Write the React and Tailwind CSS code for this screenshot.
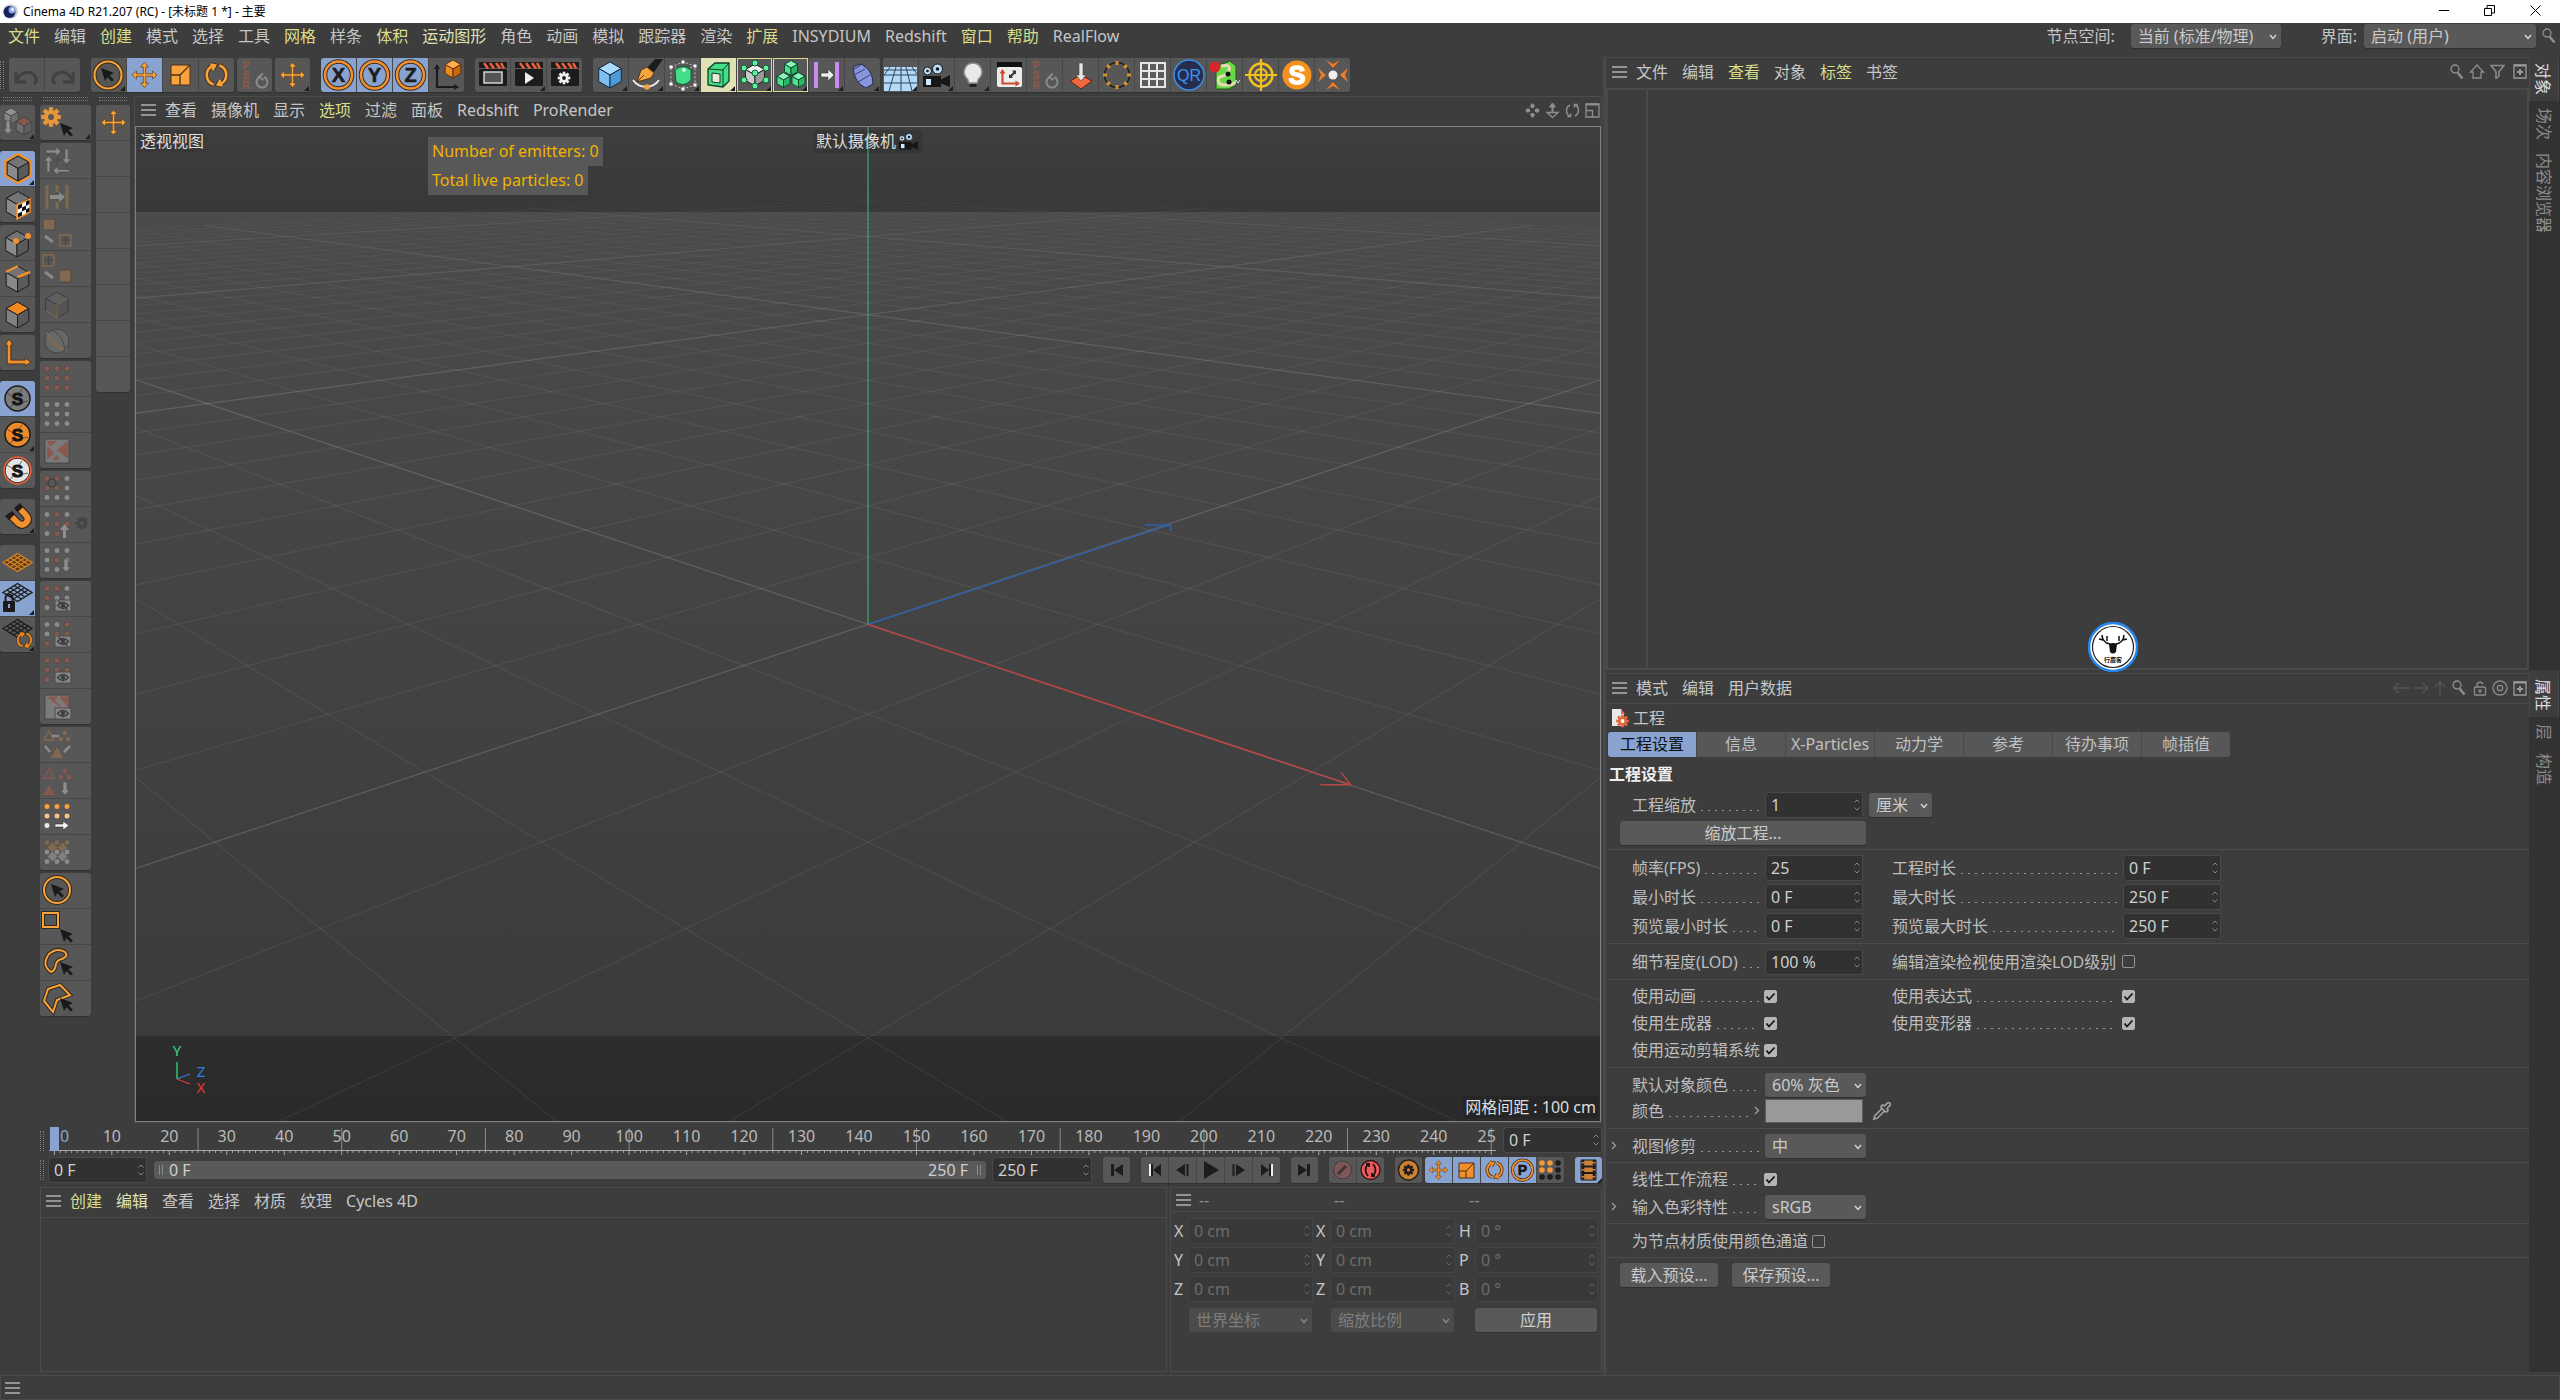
import React from 'react';
import { Pipette } from 'lucide-react';

const ORANGE = '#f09030';
const GREEN = '#44dd88';
const DARK = '#1c1c1c';

/* ---------- small shared parts ---------- */

function Burger() {
  return (
    <button aria-label="菜单" className="flex w-[15px] flex-col gap-[3px]">
      <span className="h-[2px] w-full bg-[#949494]" />
      <span className="h-[2px] w-full bg-[#949494]" />
      <span className="h-[2px] w-full bg-[#949494]" />
    </button>
  );
}

const TONES = {
  hot: 'text-[#d9dd8a]',
  warm: 'text-[#e0e2b6]',
  plain: 'text-[#c6c6c6]',
};

function Menu({ items }) {
  return (
    <nav className="flex items-center gap-[14px]">
      {items.map(([name, tone]) => (
        <button key={name} className={TONES[tone || 'plain']}>{name}</button>
      ))}
    </nav>
  );
}

function Svg({ children, w = 35, h = 34 }) {
  return <svg width={w} height={h} viewBox={`0 0 ${w} ${h}`} fill="none" className="font-['Liberation_Sans',sans-serif]">{children}</svg>;
}

function Corner({ w = 35, h = 34 }) {
  return <path d={`M${w - 1} ${h - 6}V${h - 1}H${w - 6}Z`} fill={DARK} />;
}

function ToolGroup({ children }) {
  return (
    <div className="flex shrink-0 gap-px overflow-hidden rounded-[3px] bg-[#474747] shadow-[0_1px_1px_#303030]">{children}</div>
  );
}

function Tool({ label, on, cream, ring, corner, children }) {
  const bg = on ? 'bg-[#88a3d0]' : cream ? 'bg-[#e0e2b6]' : 'bg-[#575757]';
  return (
    <button aria-label={label} className={`h-[34px] w-[35px] ${bg} ${ring ? 'outline outline-1 -outline-offset-1 outline-[#dadc8c]' : ''}`}>
      <Svg>
        {children}
        {corner && <Corner />}
      </Svg>
    </button>
  );
}

function SideGroup({ children, className = '' }) {
  return (
    <div className={`flex flex-col gap-px overflow-hidden rounded-[3px] bg-[#474747] shadow-[0_1px_1px_#303030] ${className}`}>{children}</div>
  );
}

function SideTool({ label, on, corner, wide, children }) {
  return (
    <button aria-label={label} className={`h-[35px] w-full ${on ? 'bg-[#88a3d0]' : 'bg-[#575757]'}`}>
      <Svg w={wide ? 51 : 35} h={35}>
        {children}
        {corner && <Corner w={wide ? 51 : 35} h={35} />}
      </Svg>
    </button>
  );
}

function GripH() {
  return <div className="mx-[3px] h-[4px] border-y border-dotted border-[#7d7d7d]" />;
}

function GripV() {
  return <div className="h-[20px] w-[4px] shrink-0 border-x border-dotted border-[#7d7d7d]" />;
}

function Field({ label, value, id, dim, className = 'w-[98px]' }) {
  return (
    <div className={`flex h-[26px] shrink-0 items-center rounded-l-[4px] border pr-px ${dim ? 'border-[#434343] bg-[#393939]' : 'border-[#494949] bg-[#313131]'} ${className}`}>
      <input
        id={id}
        aria-label={label}
        disabled={dim}
        defaultValue={value}
        className={`h-full w-full min-w-0 bg-transparent pl-[5px] outline-none ${dim ? 'text-[#6c6c6c]' : 'text-[#cfcfcf]'}`}
      />
      <svg width="8" height="14" viewBox="0 0 8 14" fill="none" stroke={dim ? '#666' : '#858585'} className="shrink-0">
        <path d="M1.500 4.500 4 2l2.500 2.500M1.500 9.500 4 12l2.500-2.500" />
      </svg>
    </div>
  );
}

function Select({ label, value, id, dim, className }) {
  return (
    <div className={`relative h-[24px] shrink-0 rounded-[3px] ${dim ? 'bg-[#4b4b4b]' : 'bg-[#595959] shadow-[0_1px_1px_#2f2f2f]'} ${className}`}>
      <select
        id={id}
        aria-label={label}
        disabled={dim}
        className={`h-full w-full appearance-none bg-transparent pl-[7px] leading-[22px] outline-none ${dim ? 'text-[#7d7d7d]' : 'text-[#cacaca]'}`}
      >
        <option>{value}</option>
      </select>
      <svg width="8" height="6" viewBox="0 0 8 6" fill="none" stroke={dim ? '#8a8a8a' : '#dcdcdc'} strokeWidth="1.300" className="pointer-events-none absolute right-[4px] top-[10px]">
        <path d="M1 1l3 3.500L7 1" />
      </svg>
    </div>
  );
}

function Check({ id, checked }) {
  return (
    <span className="grid size-[13px] shrink-0">
      <input
        id={id}
        type="checkbox"
        defaultChecked={checked}
        className="col-start-1 row-start-1 size-[13px] appearance-none rounded-[2px] border border-[#949494] checked:border-[#b5b5b5] checked:bg-[#b5b5b5]"
      />
      {checked && (
        <svg viewBox="0 0 13 13" fill="none" stroke="#151515" strokeWidth="1.800" className="pointer-events-none col-start-1 row-start-1">
          <path d="M2.500 6.500 5 9.500 10.500 3.500" />
        </svg>
      )}
    </span>
  );
}

/* label followed by a row of leader dots */
function Label({ children, htmlFor, arrow, className = 'w-[133px]' }) {
  return (
    <label htmlFor={htmlFor} className={`flex shrink-0 items-center whitespace-nowrap pr-[5px] text-[#bdbdbd] ${className}`}>
      {children}
      <span className="mt-[11px] h-px flex-1 bg-[linear-gradient(90deg,transparent_5px,#969696_5px)] bg-[length:7px_1px]" />
      {arrow && <span className="ml-[3px] text-[#9a9a9a]"><Caret /></span>}
    </label>
  );
}

function Caret() {
  return (
    <svg width="6" height="9" viewBox="0 0 6 9" fill="none" stroke="#a0a0a0" strokeWidth="1.300">
      <path d="M1 1l3.500 3.500L1 8" />
    </svg>
  );
}

/* ---------- icon shapes ---------- */

function Cube({ x, y, r, c, line = DARK, sw = 1 }) {
  const a = r * 0.87;
  const b = r * 0.5;
  return (
    <g stroke={line} strokeWidth={sw} strokeLinejoin="round">
      <path d={`M${x} ${y - r}L${x + a} ${y - b}L${x} ${y}L${x - a} ${y - b}Z`} fill={c[0]} />
      <path d={`M${x - a} ${y - b}L${x} ${y}V${y + r}L${x - a} ${y + b}Z`} fill={c[1]} />
      <path d={`M${x + a} ${y - b}L${x} ${y}V${y + r}L${x + a} ${y + b}Z`} fill={c[2]} />
    </g>
  );
}

const GREY = ['#747474', '#8a8a8a', '#5a5a5a'];

function MoveIcon({ x = 17.5, y = 17, s = 1, c = '#f7a23b' }) {
  return (
    <g transform={`translate(${x} ${y}) scale(${s})`} fill={c} stroke="#5a3a18" strokeWidth=".700">
      <path d="M0-12.500 4-8H1.200V-1.200H8V-4L12.500 0 8 4V1.200H1.200V8H4L0 12.500-4 8H-1.200V1.200H-8V4L-12.500 0-8-4V-1.200H-1.200V-8H-4Z" />
    </g>
  );
}

function Cursor({ x, y, s = 1 }) {
  return <path transform={`translate(${x} ${y}) scale(${s})`} d="M0 0 13 5 8.500 7.200 13 12 10.500 13.500 6.500 9 4 13Z" fill="#191919" />;
}

function Axis({ name }) {
  return (
    <>
      <circle cx="17.500" cy="17" r="13.500" stroke="#3c2c1c" strokeWidth="4.500" />
      <circle cx="17.500" cy="17" r="13.500" stroke={ORANGE} strokeWidth="2.500" />
      <text x="17.500" y="24" textAnchor="middle" fontSize="20" fontWeight="700" fill="#1d1d1d" stroke="#1d1d1d" strokeWidth=".600">{name}</text>
    </>
  );
}

function Rotate({ x = 17.500, y = 17, s = 1, c = '#f7a23b', edge = '#4a3018' }) {
  return (
    <g transform={`translate(${x} ${y}) scale(${s})`}>
      {[edge, c].map((col, k) => (
        <g key={col} stroke={col} strokeWidth={k ? 2.6 : 4.6} fill="none">
          <path d="M-3 9.500A10 10 0 0 1-4-9" />
          <path d="M3-9.500A10 10 0 0 1 4 9" />
          <path d="M-6-10.500-1.500-9.500-4-5M6 10.500 1.500 9.500 4 5" />
        </g>
      ))}
    </g>
  );
}

function Psr() {
  return (
    <>
      <g fontSize="10" fontWeight="700" fill="#8a574b" stroke="#8a574b" strokeWidth=".500" textAnchor="middle">
        <text x="9" y="11">P</text>
        <text x="9" y="21">S</text>
        <text x="9" y="31">R</text>
      </g>
      <path d="M22 19.500A5.500 5.500 0 1 0 27 19M26 15.500 22 19l4.500 3" stroke="#8a8a8a" strokeWidth="2" />
    </>
  );
}

function Clapper({ children }) {
  return (
    <>
      <rect x="4" y="11" width="28" height="17" rx="1.500" fill={DARK} />
      <path d="M4 4h28v6H4Z" fill={DARK} />
      <path d="M9 5l4 5.500M15 5l4 5.500M21 5l4 5.500M26 5l3 5.500" stroke="#e8603c" strokeWidth="2.600" />
      {children}
    </>
  );
}

function Gear({ x, y, r = 4, c = '#eee', hole = DARK }) {
  const teeth = [0, 45, 90, 135];
  return (
    <g transform={`translate(${x} ${y})`}>
      {teeth.map((t) => (
        <rect key={t} x={-r * 0.3} y={-r * 1.4} width={r * 0.6} height={r * 2.8} fill={c} transform={`rotate(${t})`} />
      ))}
      <circle r={r} fill={c} />
      <circle r={r * 0.42} fill={hole} />
    </g>
  );
}

function Camera({ s = 1 }) {
  return (
    <g transform={`scale(${s})`}>
      <path d="M4 18h18v11H4Z" fill="#161616" />
      <path d="M21 22l10-5v12l-10-4Z" fill="#161616" />
      <rect x="7" y="21" width="5" height="6" fill="#cfe8fb" />
      <circle cx="8.500" cy="13" r="4" fill="#bcdcf6" stroke="#161616" />
      <circle cx="18.500" cy="11" r="5" fill="#bcdcf6" stroke="#161616" />
      <circle cx="8.500" cy="13" r="1.300" fill="#161616" />
      <circle cx="18.500" cy="11" r="1.800" fill="#161616" />
    </g>
  );
}

/* 3x3 point matrix: r = red, g = grey, o = orange, p = pale, w = white, t = tan, . = empty */
const DOT = { r: '#85594d', g: '#8b8b8b', o: '#f9a23c', p: '#f5c386', w: '#f0e6dc', t: '#7c6a54' };

function Dots({ map }) {
  return map.split('').map((k, i) =>
    k === '.' ? null : (
      <circle key={i} cx={7 + (i % 3) * 10} cy={7.5 + Math.floor(i / 3) * 9.5} r="3" fill={DOT[k]} stroke="#4a4a4a" strokeWidth=".800" />
    ),
  );
}

function Eye({ off }) {
  return (
    <g stroke="#3d3d3d">
      <rect x="15" y="19" width="16" height="11" fill="#858585" stroke="#4c4c4c" />
      <path d="M17.500 24.500q5.500-6 11 0q-5.500 6-11 0Z" strokeWidth="1.300" />
      <circle cx="23" cy="24.500" r="1.800" fill="#3d3d3d" />
      {off && <path d="M18.500 20l9 9" strokeWidth="1.500" />}
    </g>
  );
}

function SBall({ fill, ring }) {
  return (
    <>
      <circle cx="17.500" cy="17.500" r="12.500" fill={fill} stroke={DARK} strokeWidth="1.500" />
      {ring && <circle cx="17.500" cy="17.500" r="13.300" stroke={ring} strokeWidth="1.800" />}
      <path d="M7 12l6 4M22 8l-5 7M28 20l-9 2M10 27l5-7" stroke="#333" strokeWidth=".700" />
      <text x="17.500" y="23.500" textAnchor="middle" fontSize="17" fontWeight="700" fill="#161616" stroke="#161616">S</text>
    </>
  );
}

function Mesh({ c, dy = 0, fill = 'none' }) {
  return (
    <g transform={`translate(0 ${dy})`} stroke={c} strokeWidth="1.400">
      <path d="M3 17.500 17.500 8.500 32 17.500 17.500 26.500Z" fill={fill} />
      <path d="M7 15l14.500 9M10.500 13l14.500 9M14 10.500l14.500 9M28 15l-14.500 9M24.500 13 10 22M21 10.500 6.500 19.500" />
    </g>
  );
}

function ArrowDown({ x, y }) {
  return <path d={`M${x - 2} ${y}h4v8h2.500l-4.500 5-4.500-5h2.500Z`} fill="#8f8f8f" stroke="#4a4a4a" strokeWidth=".600" />;
}

/* ---------- top bars ---------- */

function TitleBar() {
  return (
    <header className="flex h-[23px] items-center bg-white pl-[3px] text-[12px] text-black">
      <svg width="15" height="17" viewBox="0 0 15 17">
        <circle cx="7.500" cy="8.500" r="7.300" fill="#c9cad6" />
        <circle cx="6.500" cy="9" r="6" fill="#14225e" />
        <circle cx="9" cy="7" r="3.500" fill="#8fa3de" />
        <circle cx="9.500" cy="6.500" r="1.500" fill="#fff" />
      </svg>
      <span className="ml-[5px]">Cinema 4D R21.207 (RC) - [未标题 1 *] - 主要</span>
      <div className="ml-auto flex items-center gap-[35px] pb-[2px] pr-[19px]">
        <button aria-label="最小化" className="h-px w-[10px] bg-black" />
        <button aria-label="还原">
          <svg width="11" height="11" viewBox="0 0 11 11" fill="none" stroke="#000"><path d="M.5 3.500h7v7h-7ZM3 3V.5h7.500V8H8" /></svg>
        </button>
        <button aria-label="关闭">
          <svg width="11" height="11" viewBox="0 0 11 11" stroke="#000"><path d="M.5.5l10 10M10.500.5l-10 10" /></svg>
        </button>
      </div>
    </header>
  );
}

const MAIN_MENU = [
  ['文件', 'hot'], ['编辑'], ['创建', 'hot'], ['模式'], ['选择'], ['工具'], ['网格', 'hot'], ['样条'], ['体积', 'hot'],
  ['运动图形', 'warm'], ['角色'], ['动画'], ['模拟'], ['跟踪器'], ['渲染'], ['扩展', 'hot'], ['INSYDIUM'], ['Redshift'],
  ['窗口', 'hot'], ['帮助', 'hot'], ['RealFlow'],
];

function SearchIcon() {
  return (
    <svg width="14" height="16" viewBox="0 0 14 16" fill="none" stroke="#8f8f8f">
      <circle cx="5" cy="5" r="4" strokeWidth="1.300" />
      <path d="M7.500 8.500l5 6" strokeWidth="2.400" />
    </svg>
  );
}

function MenuBar() {
  return (
    <div className="flex h-[34px] items-start pl-[8px] pr-[4px] pt-px">
      <div className="flex h-[24px] items-center"><Menu items={MAIN_MENU} /></div>
      <div className="ml-auto flex items-center">
        <label htmlFor="node" className="mr-[16px]">节点空间:</label>
        <Select id="node" value="当前 (标准/物理)" className="w-[150px]" />
        <label htmlFor="layout" className="ml-[40px] mr-[7px]">界面:</label>
        <Select id="layout" value="启动 (用户)" className="w-[172px]" />
        <button aria-label="搜索" className="ml-[6px]"><SearchIcon /></button>
      </div>
    </div>
  );
}

function MainToolbar() {
  return (
    <div className="flex h-[39px] items-start pt-px">
      <div className="mt-[3px] h-[28px] w-[4px] shrink-0 border-x border-dotted border-[#7d7d7d]" />
      <div className="ml-[5px] flex gap-[11px]">
        <ToolGroup>
          <Tool label="撤销"><path d="M7 14v10h10M8 23c2-8 10-11 16-7 4 3 4 8 1 10" stroke="#414141" strokeWidth="3" /></Tool>
          <Tool label="重做"><path d="M28 14v10H18M27 23c-2-8-10-11-16-7-4 3-4 8-1 10" stroke="#414141" strokeWidth="3" /></Tool>
        </ToolGroup>
        <div className="flex gap-[3px]">
          <ToolGroup>
            <Tool label="实时选择" corner>
              <circle cx="17" cy="17" r="13.500" stroke="#33271a" strokeWidth="4" />
              <circle cx="17" cy="17" r="13.500" stroke="#f7a23b" strokeWidth="2.200" />
              <Cursor x={10} y={10} />
            </Tool>
            <Tool label="移动" on><MoveIcon /></Tool>
            <Tool label="缩放">
              <path d="M8 7h19v20H8Z" fill="#f7a23b" stroke="#4a3018" />
              <path d="M8 17h9v10M17 17l10-10" stroke="#4a3018" strokeWidth="1.300" />
            </Tool>
            <Tool label="旋转"><Rotate /></Tool>
          </ToolGroup>
          <ToolGroup><Tool label="PSR"><Psr /></Tool></ToolGroup>
          <ToolGroup><Tool label="最近工具" corner><MoveIcon /></Tool></ToolGroup>
        </div>
        <ToolGroup>
          <Tool label="X轴" on><Axis name="X" /></Tool>
          <Tool label="Y轴" on><Axis name="Y" /></Tool>
          <Tool label="Z轴" on><Axis name="Z" /></Tool>
          <Tool label="坐标系统">
            <path d="M8 9v20h19" stroke={DARK} strokeWidth="2.200" />
            <path d="M8 6l3 5H5ZM30 29l-5-3v6Z" fill={DARK} />
            <Cube x={24} y={11} r={9} c={['#ffb04c', '#f28a22', '#c9680c']} line="#5a3210" />
          </Tool>
        </ToolGroup>
        <ToolGroup>
          <Tool label="渲染活动视图"><Clapper><rect x="9" y="14" width="18" height="11" fill="#555" stroke="#ddd" strokeWidth="1.400" /></Clapper></Tool>
          <Tool label="渲染到图片查看器" corner><Clapper><path d="M14 14l9 6-9 6Z" fill="#eee" /></Clapper></Tool>
          <Tool label="编辑渲染设置"><Clapper><Gear x={17} y={20} r={4.5} /></Clapper></Tool>
        </ToolGroup>
        <div className="flex gap-[3px]">
          <ToolGroup>
            <Tool label="立方体" corner><Cube x={17} y={17} r={13} c={['#a9dbff', '#7cc0f5', '#4f9ad6']} line="#14283a" /></Tool>
            <Tool label="画笔" corner>
              <path d="M18 10l8-9h8l-9 13Z" fill={DARK} />
              <path d="M18 9l7 6-3 5-14 4 4-12Z" fill="#f5a53f" stroke="#5a3414" />
              <path d="M8 24l7-7" stroke="#5a3414" />
              <path d="M4 22c6 9 20 9 26 0" stroke="#eee" strokeWidth="1.800" />
              <circle cx="18" cy="29" r="2.800" fill="#f7a23b" />
            </Tool>
            <Tool label="细分曲面" corner>
              <path d="M6 9 18 4l12 4v19l-12 4-12-5ZM6 9l13 3 11-4M19 12v19" stroke="#ccc" strokeWidth=".900" strokeDasharray="2 2" />
              <path d="M10 12q8-7 16 0v10q-7 8-15 2Z" fill={GREEN} stroke="#0d5c34" />
              {[[6, 9], [18, 4], [30, 8], [30, 27], [18, 31], [6, 26], [19, 12]].map(([x, y]) => <rect key={`${x}${y}`} x={x - 1.5} y={y - 1.5} width="3" height="3" fill="#fff" />)}
            </Tool>
            <Tool label="挤压" cream corner>
              <path d="M7 11 14 5h14v18l-6 6-15-2Z" fill={GREEN} stroke="#0f3d26" strokeWidth="1.300" />
              <path d="M7 11l15 1v17M22 12l6-7" stroke="#0f3d26" />
              <path d="M11 15l8 1v9l-8-1Z" fill="#e9eadb" stroke="#0f3d26" />
            </Tool>
            <Tool label="体积生成" ring corner>
              <Cube x={18} y={17} r={11} c={['#f0f0f0', '#c8c8c8', '#9a9a9a']} />
              {[[18, 5], [7, 10], [29, 10], [18, 15], [7, 22], [29, 22], [18, 28]].map(([x, y]) => <circle key={`${x}-${y}`} cx={x} cy={y} r="3" fill="#5cf09e" stroke="#0f5c34" />)}
            </Tool>
            <Tool label="克隆" ring corner>
              {[[18, 10], [10.5, 22], [25.500, 22]].map(([x, y]) => <Cube key={x} x={x} y={y} r={7.5} c={['#8bf5ba', '#4fe08f', '#2bb768']} line="#0c4a2a" />)}
            </Tool>
            <Tool label="场" corner>
              <path d="M7 4v26M28 4v26" stroke="#c78bf2" strokeWidth="4" />
              <path d="M12 15h7v-4l6 6-6 6v-4h-7Z" fill="#eee" stroke="#333" strokeWidth=".600" />
            </Tool>
            <Tool label="弯曲" corner>
              <path d="M8 9 16 6q12 6 12 20l-7 4Q9 25 8 9Z" fill="#8796dc" stroke="#252c52" />
              <path d="M9 17l11-6M13 24l12-7M16 6q-1 3-7 5" stroke="#252c52" strokeWidth=".800" />
            </Tool>
          </ToolGroup>
          <ToolGroup>
            <Tool label="地面" corner>
              <rect x="1" y="9" width="33" height="24" fill="#b5d9f8" />
              <path d="M1 12h33M1 17h33M1 25h33M13 9 6 33M18 9v24M23 9l6 24M7 9l-6 8M29 9l5 7" stroke="#25384a" strokeWidth=".900" />
            </Tool>
            <Tool label="摄像机" corner><Camera /></Tool>
            <Tool label="灯光" corner>
              <path d="M18 5a9 9 0 0 1 5.500 16l-1.500 4h-8l-1.500-4A9 9 0 0 1 18 5Z" fill="#e9e9e9" stroke="#8c8c8c" strokeWidth="1.500" />
              <path d="M14.500 26h7v3h-7Z" fill="#222" />
            </Tool>
            <Tool label="布局">
              <rect x="6" y="4" width="25" height="6" fill="#111" />
              <rect x="6" y="9" width="25" height="20" rx="2" fill="#ececec" />
              <path d="M11.500 14v11.500h14" stroke="#c54f28" strokeWidth="2.200" />
              <path d="M11.500 11l3 4.500h-6ZM29 25.500l-4.500-3v6Z" fill="#c54f28" />
              <path d="M19 19l5-5" stroke="#333" strokeWidth="2.200" />
              <path d="M25 12.500v4l-4-4ZM18 20v-4l4 4Z" fill="#333" />
            </Tool>
            <Tool label="重置PSR"><Psr /></Tool>
            <Tool label="落到地面">
              <path d="M7 23l11-6 11 6-11 8Z" fill="#f0683a" stroke="#5c2410" />
              <path d="M16 5h4v12h3l-5 6-5-6h3Z" fill="#e6e6e6" stroke="#444" strokeWidth=".600" />
            </Tool>
            <Tool label="圆环">
              <circle cx="18" cy="17" r="12.500" stroke="#1f1f1f" strokeWidth="1.500" />
              {[0, 45, 90, 135, 180, 225, 270, 315].map((a) => <rect key={a} x="16.500" y="3" width="3" height="4" fill="#d8912c" transform={`rotate(${a} 18 17)`} />)}
            </Tool>
            <Tool label="网格">
              <rect x="5" y="4" width="26" height="26" fill="#e6e6e6" />
              {[0, 1, 2].map((r) => [0, 1, 2].map((c) => <rect key={`${r}${c}`} x={7 + c * 8} y={6 + r * 8} width="6" height="6" fill="#5b5b5b" />))}
            </Tool>
            <Tool label="QR">
              <circle cx="18" cy="17" r="15" fill="#262c4e" stroke="#3a8ee4" strokeWidth="1.500" />
              <text x="18" y="23" textAnchor="middle" fontSize="16" fill="#3c96f0">QR</text>
            </Tool>
            <Tool label="样条工具">
              <path d="M13 7l10-4 6 5v19l-7 4H9V12Z" fill="#68d848" stroke="#1c5a12" />
              <path d="M14 8q10-2 8 4t-10 7q-3 8 6 8t10-3" stroke="#ecd9b4" strokeWidth="3" />
              <circle cx="21" cy="16" r="2.500" fill="#111" /><circle cx="22" cy="24" r="2.500" fill="#111" />
              <circle cx="8" cy="9" r="5.500" fill="#d9262b" />
              <path d="M27 26l2-4 2 3 2-3" stroke="#ddd" />
            </Tool>
            <Tool label="目标">
              <circle cx="18" cy="17" r="11.500" stroke="#f4c21c" strokeWidth="2.400" />
              <circle cx="18" cy="17" r="6" stroke="#f4c21c" strokeWidth="2" />
              <path d="M18 1v32M2 17h32" stroke="#f4c21c" strokeWidth="2.200" />
            </Tool>
            <Tool label="S插件">
              <circle cx="18" cy="17" r="14.500" fill="#f5921e" />
              <text x="18" y="26" textAnchor="middle" fontSize="25" fontWeight="700" fill="#fff" stroke="#fff" strokeWidth="1.500">S</text>
            </Tool>
            <Tool label="居中">
              <path d="M11 2l7 4 7-4-7 8ZM11 32l7-4 7 4-7-8ZM3 10l8 7-8 7 3-7ZM33 10l-8 7 8 7-3-7Z" fill="#f47b20" />
              <circle cx="18" cy="17" r="4.500" fill="#efefef" />
            </Tool>
          </ToolGroup>
        </div>
      </div>
    </div>
  );
}

/* ---------- left tool columns ---------- */

function ModeColumn() {
  return (
    <div className="w-[35px]">
      <GripH />
      <SideGroup className="mt-[4px]">
        <SideTool label="转为可编辑对象" corner>
          <Cube x={11} y={11} r={8} c={['#939393', '#858585', '#6f6f6f']} line="#4a4a4a" />
          <Cube x={24} y={21} r={9} c={['#84594c', '#6e6e6e', '#5e5e5e']} line="#444" />
          <ArrowDown x={8} y={16} />
        </SideTool>
      </SideGroup>
      <SideGroup className="mt-[11px]">
        <SideTool label="模型" on corner><Cube x={18} y={17.5} r={14.5} c={GREY} line={ORANGE} sw={2.4} /><Cube x={18} y={17.5} r={12.5} c={GREY} /></SideTool>
        <SideTool label="纹理">
          <Cube x={18} y={18} r={13.5} c={GREY} />
          <path d="M17 18l13-6v13l-13 7Z" fill="#fff" stroke={ORANGE} strokeWidth="1.600" />
          <path d="M18 18.500l4-2v4l-4 2ZM26 14.500l3.500-1.500v4l-3.500 2ZM22 20.500l4-2v4l-4 2ZM18 26.500l4-2v4l-4 2ZM26 22.500l3.500-2v4L26 26Z" fill="#111" />
        </SideTool>
      </SideGroup>
      <SideGroup className="mt-[3px]">
        <SideTool label="点"><Cube x={17} y={19} r={13} c={GREY} /><circle cx="16" cy="16" r="3" fill={ORANGE} /><circle cx="28" cy="11" r="3" fill={ORANGE} /></SideTool>
        <SideTool label="边"><Cube x={17.500} y={18} r={13} c={GREY} /><path d="M6 11l12-6M18 16l12-5" stroke={ORANGE} strokeWidth="2.500" /></SideTool>
        <SideTool label="多边形"><Cube x={17.500} y={18} r={13} c={['#f58a20', '#808080', '#5a5a5a']} /></SideTool>
      </SideGroup>
      <SideGroup className="mt-[3px]">
        <SideTool label="启用轴心">
          <path d="M9 8v19h18" stroke="#3a2410" strokeWidth="4.500" />
          <path d="M9 4l4 6H5ZM31 27l-6-4v8Z" fill={ORANGE} stroke="#3a2410" strokeWidth=".700" />
          <path d="M9 8v19h18" stroke={ORANGE} strokeWidth="2.800" />
        </SideTool>
      </SideGroup>
      <SideGroup className="mt-[11px]">
        <SideTool label="独显关闭" on><SBall fill="#7b7b7b" /></SideTool>
        <SideTool label="独显单一" corner><SBall fill="#ef8a2c" /></SideTool>
        <SideTool label="独显层级"><SBall fill="#e4e4e4" ring="#e0603c" /></SideTool>
      </SideGroup>
      <SideGroup className="mt-[11px]">
        <SideTool label="捕捉" corner>
          <path d="M9 15l8 8q5 5 9 1t-1-9l-7-7" stroke="#2c1c0e" strokeWidth="8" />
          <path d="M9 15l8 8q5 5 9 1t-1-9l-7-7" stroke={ORANGE} strokeWidth="6" />
          <path d="M5 17l7-5 3 3-6 6ZM14 9l6-5 3 4-5 5Z" fill={DARK} />
        </SideTool>
      </SideGroup>
      <SideGroup className="mt-[11px]">
        <SideTool label="工作平面"><Mesh c="#d98224" fill="#5a3c18" /></SideTool>
        <SideTool label="锁定工作平面" on corner>
          <Mesh c={DARK} dy={-6} />
          <rect x="3" y="20" width="12" height="11" rx="1" fill={DARK} /><path d="M5.500 20v-3a3.500 3.500 0 0 1 7 0v3" stroke={DARK} strokeWidth="2" />
          <rect x="8" y="23" width="2" height="4" fill="#88a3d0" />
        </SideTool>
        <SideTool label="平面旋转" corner><Mesh c={DARK} dy={-6} /><Rotate x={24.5} y={23} s={0.68} c="#f58a20" /></SideTool>
      </SideGroup>
    </div>
  );
}

function SelectColumn() {
  const tan = '#80694e';
  return (
    <div className="w-[51px]">
      <GripH />
      <SideGroup className="mt-[4px]">
        <SideTool label="选择设置" wide corner><Gear x={11} y={12} r={7} c="#e8963a" hole="#575757" /><Cursor x={20} y={18} /></SideTool>
      </SideGroup>
      <SideGroup className="mt-[3px]">
        <SideTool label="循环选择" wide>
          <path d="M8 8h19v19H8ZM17 10v15M10 17h15" stroke="#4b4b4b" />
          <path d="M6 7h10v-3l5 4.500-5 4.500v-3H6ZM28 6v10h3l-4.500 5-4.500-5h3V6ZM29 29H18v3l-5-4.500 5-4v3h11ZM7 29V18H4l4.500-5 4.500 5h-3v11Z" fill="#8b8b8b" stroke="#4d4d4d" strokeWidth=".600" />
        </SideTool>
        <SideTool label="环状选择" wide>
          <path d="M7 6v24M27 6v24M17 6v7M17 23v7" stroke={tan} strokeWidth="3" /><path d="M10 16h9v-3l6 5-6 5v-3h-9Z" fill="#8b8b8b" />
        </SideTool>
        <SideTool label="转换选择" wide>
          <rect x="3" y="4" width="12" height="11" fill={tan} stroke="#4a4a4a" /><path d="M5 21l8 6" stroke="#888" strokeWidth="3" />
          <rect x="20" y="20" width="11" height="11" stroke={tan} strokeWidth="1.500" /><path d="M22 25h8M25.500 21v9" stroke="#444" />
        </SideTool>
        <SideTool label="转换轮廓" wide>
          <rect x="3" y="4" width="11" height="11" stroke={tan} strokeWidth="1.500" /><path d="M5 9h8M8.500 5v9" stroke="#444" /><path d="M5 21l8 6" stroke="#888" strokeWidth="3" />
          <rect x="19" y="19" width="12" height="12" fill={tan} stroke="#4a4a4a" />
        </SideTool>
        <SideTool label="轮廓选择" wide><Cube x={17} y={18} r={13} c={['#5e5e5e', '#595959', '#545454']} line="#3c3c3c" /><path d="M6 24l11 7V18l11-7" stroke={tan} strokeWidth="1.300" /></SideTool>
        <SideTool label="平滑着色选择" wide><circle cx="17" cy="18" r="12" fill="#686868" stroke="#444" /><path d="M7 10q6 14 20 17" stroke={tan} strokeWidth="2.500" /><path d="M12 7q12 6 13 21" stroke="#444" /></SideTool>
      </SideGroup>
      <SideGroup className="mt-[3px]">
        <SideTool label="全选" wide><Dots map="rrrrrrrrr" /></SideTool>
        <SideTool label="取消选择" wide><Dots map="ggggggggg" /></SideTool>
        <SideTool label="反选" wide>
          <rect x="5" y="6" width="24" height="24" fill="#7b7b7b" stroke="#474747" /><path d="M7 27V13l7 7ZM20 27h-8l5-5ZM28 8v18L17 17ZM7 8h10l-7 6Z" fill="#8a594c" />
        </SideTool>
      </SideGroup>
      <SideGroup className="mt-[3px]">
        <SideTool label="选择连接" wide><Dots map="rrgrrgggg" /><circle cx="12" cy="12" r="4" stroke="#3f3f3f" strokeWidth="1.500" /></SideTool>
        <SideTool label="扩展选择" wide>
          <Dots map="grgrrrgr." /><path d="M26 31V23h3l-4.500-6-4.500 6h3v8Z" fill="#8f8f8f" /><Gear x={42} y={16} r={4.5} c="#444" hole="#575757" />
        </SideTool>
        <SideTool label="收缩选择" wide><Dots map="ggggrggg." /><ArrowDown x={26} y={16} /></SideTool>
      </SideGroup>
      <SideGroup className="mt-[3px]">
        <SideTool label="隐藏选择" wide><Dots map="rrgrggg.." /><Eye off /></SideTool>
        <SideTool label="隐藏未选择" wide><Dots map="ggrgrrr.." /><Eye off /></SideTool>
        <SideTool label="全部显示" wide><Dots map="rrrrrrr.." /><Eye /></SideTool>
        <SideTool label="反转显示" wide><rect x="5" y="6" width="24" height="24" fill="#7b7b7b" stroke="#474747" /><path d="M7 8h10l-3 3 10 10M28 8v10L20 8Z" fill="#8a594c" stroke="#8a594c" /><Eye /></SideTool>
      </SideGroup>
      <SideGroup className="mt-[3px]">
        <SideTool label="转换选择模式" wide>
          <path d="M9 4l5 9H4Z" stroke={tan} strokeWidth="1.500" /><path d="M17 20l6 11H11Z" fill={tan} />
          <circle cx="25" cy="6" r="2.300" fill={tan} /><circle cx="21" cy="12" r="2.300" fill={tan} /><circle cx="28" cy="12" r="2.300" fill={tan} />
          <path d="M12 9h7M10 25l-5-6M30 19l-6 6" stroke="#8b8b8b" strokeWidth="2.500" />
        </SideTool>
        <SideTool label="设置选择集" wide>
          <path d="M9 6l5 9H4Z" stroke="#85594d" strokeWidth="1.500" /><path d="M9 22l6 10H3Z" fill="#85594d" />
          <circle cx="25" cy="8" r="2.300" fill="#85594d" /><circle cx="21" cy="14" r="2.300" fill="#85594d" /><circle cx="29" cy="14" r="2.300" fill="#85594d" /><ArrowDown x={25} y={19} />
        </SideTool>
        <SideTool label="设置顶点权重" wide><Dots map="ooopppw.." /><path d="M15 25h8v-3l6 4.500-6 4.500v-3h-8Z" fill="#f4f4f4" stroke="#333" strokeWidth=".600" /></SideTool>
        <SideTool label="填充选择" wide>
          <Dots map="tttgggggg" />
          <rect x="9" y="9" width="7" height="7" fill={tan} transform="rotate(45 12.500 12.500)" /><rect x="19" y="9" width="7" height="7" fill={tan} transform="rotate(45 22.500 12.500)" />
          <rect x="9" y="18" width="7" height="7" fill="#808080" transform="rotate(45 12.500 21.500)" /><rect x="19" y="18" width="7" height="7" fill="#808080" transform="rotate(45 22.500 21.500)" />
        </SideTool>
      </SideGroup>
      <SideGroup className="mt-[3px]">
        <SideTool label="实时选择" wide><circle cx="17" cy="17" r="13" stroke="#33271a" strokeWidth="4" /><circle cx="17" cy="17" r="13" stroke="#f7a23b" strokeWidth="2" /><Cursor x={11} y={11} /></SideTool>
        <SideTool label="框选" wide><path d="M3 4h15v14H3Z" stroke="#33271a" strokeWidth="4" /><path d="M3 4h15v14H3Z" stroke="#f7a23b" strokeWidth="2" /><Cursor x={20} y={20} /></SideTool>
        <SideTool label="套索选择" wide>
          {['#33271a', '#f7a23b'].map((c, k) => <path key={c} d="M11 27Q1 20 9 9q8-7 16-2 4 4-3 7-5 1-6 5-1 7-5 8Z" stroke={c} strokeWidth={k ? 2 : 4} />)}
          <Cursor x={20} y={17} />
        </SideTool>
        <SideTool label="多边形选择" wide>
          {['#33271a', '#f7a23b'].map((c, k) => <path key={c} d="M8 8 20 4l10 10-13 5-4 12L4 20Z" stroke={c} strokeWidth={k ? 2 : 4} />)}
          <Cursor x={20} y={17} />
        </SideTool>
      </SideGroup>
    </div>
  );
}

function EmptyColumn() {
  return (
    <div className="w-[34px]">
      <GripH />
      <SideGroup className="mt-[4px]">
        <SideTool label="移动"><MoveIcon y={17.5} /></SideTool>
        {[1, 2, 3, 4, 5, 6, 7].map((n) => <SideTool key={n} label={`空位 ${n}`} />)}
      </SideGroup>
    </div>
  );
}

/* ---------- viewport ---------- */

// ground plane seen by a camera looking along the diagonal
function project(i, j) {
  const w = 6.76 + (i + j) / 2;
  return [732 + (776.5 * (i - j)) / w, -21.5 + 3503 / w];
}

const REACH = 35;
const GRID = [];
for (let n = -REACH; n <= REACH; n++) {
  const near = Math.max(-REACH, 2 * (2.4 - 6.76) - n);
  if (near >= REACH) continue;
  GRID.push({ n, a: project(near, n), b: project(REACH, n) });
  GRID.push({ n, a: project(n, near), b: project(n, REACH) });
}

function Scene() {
  return (
    <svg viewBox="0 0 1464 993" preserveAspectRatio="xMidYMid slice" className="absolute inset-0 size-full" fill="none">
      <defs>
        <linearGradient id="sky" x1="0" y1="0" x2="0" y2="1"><stop stopColor="#3e3e3e" /><stop offset="1" stopColor="#383838" /></linearGradient>
        <linearGradient id="floor" x1="0" y1="0" x2="0" y2="1"><stop stopColor="#4b4b4b" /><stop offset="1" stopColor="#3b3b3b" /></linearGradient>
        <linearGradient id="low" x1="0" y1="0" x2="0" y2="1"><stop stopColor="#2d2d2d" /><stop offset="1" stopColor="#2a2a2a" /></linearGradient>
        <linearGradient id="haze" gradientUnits="userSpaceOnUse" x1="0" y1="55" x2="0" y2="355">
          <stop stopColor="#000" /><stop offset=".1" stopColor="#444" /><stop offset=".3" stopColor="#aaa" /><stop offset="1" stopColor="#fff" />
        </linearGradient>
        <mask id="far"><rect width="1464" height="993" fill="url(#haze)" /></mask>
      </defs>
      <rect width="1464" height="86" fill="url(#sky)" />
      <rect y="85" width="1464" height="823" fill="url(#floor)" />
      <rect y="908" width="1464" height="85" fill="url(#low)" />
      <g mask="url(#far)">
        {GRID.map(({ n, a, b }, k) => (
          <path key={k} d={`M${a[0].toFixed(1)} ${a[1].toFixed(1)}L${b[0].toFixed(1)} ${b[1].toFixed(1)}`} stroke="#fff" strokeWidth="1.200" strokeOpacity={n % 10 === 0 ? 0.16 : 0.065} />
        ))}
      </g>
      <path d="M732 0V497" stroke="#3f9462" strokeWidth="1.500" />
      <path d="M732 497 1033 397.500M1009 397.500h25l1 6" stroke="#2d62ab" strokeWidth="1.500" />
      <path d="M732 497 1214 657M1184 657h30l-9-12" stroke="#b84646" strokeWidth="1.500" />
    </svg>
  );
}

function Viewport() {
  return (
    <section className="flex min-w-0 flex-1 flex-col border border-[#4b4b4b]">
      <div className="flex h-[29px] items-center gap-[9px] pb-[3px] pl-[6px] pr-px">
        <Burger />
        <Menu items={[['查看'], ['摄像机'], ['显示'], ['选项', 'hot'], ['过滤'], ['面板'], ['Redshift'], ['ProRender']]} />
        <div className="ml-auto flex gap-[5px] text-[#8f8f8f]">
          <button aria-label="平移"><svg width="15" height="15" viewBox="0 0 15 15" fill="currentColor"><path d="M7.500 0l3 3.500h-1.500V5H6V3.500H4.500ZM7.500 15l3-3.500H9V10H6v1.500H4.500ZM0 7.500l3.500-3V6H5v3H3.500v1.500ZM15 7.500l-3.500-3V6H10v3h1.500v1.500Z" /></svg></button>
          <button aria-label="推拉"><svg width="15" height="15" viewBox="0 0 15 15" fill="none" stroke="currentColor"><path d="M7.500 0l3 4H4.500Z" fill="currentColor" /><path d="M7.500 3v7" strokeWidth="2" /><path d="M2 9.500h11l-5.500 5Z" strokeWidth="1.300" /></svg></button>
          <button aria-label="旋转"><svg width="15" height="15" viewBox="0 0 15 15" fill="none" stroke="currentColor" strokeWidth="1.500"><path d="M5 13.500A6.500 6.500 0 0 1 5 2M10 1.500A6.500 6.500 0 0 1 10 13M2.500 13.500H5.500V10.500M12.500 1.500H9.500V4.500" /></svg></button>
          <button aria-label="切换视图"><svg width="15" height="15" viewBox="0 0 15 15" fill="none" stroke="currentColor"><path d="M1 1h13v13H1ZM1 7.500h6.500V14" strokeWidth="1.300" /><path d="M1 1.500h13" strokeWidth="2" /></svg></button>
        </div>
      </div>
      <div className="relative min-h-[480px] flex-1 overflow-hidden border border-[#808080] text-[#dedede]">
        <Scene />
        <span className="absolute left-[2px] top-[3px] rounded-[3px] bg-[#383838] px-[2px] leading-[23px]">透视视图</span>
        <span className="absolute left-1/2 top-[3px] flex -translate-x-1/2 items-center rounded-[3px] bg-black/10 px-[2px] leading-[23px]">
          默认摄像机<svg width="24" height="19" viewBox="1 4 32 27"><Camera /></svg>
        </span>
        <div className="absolute left-[292px] top-[10px] flex flex-col items-start leading-[29px] text-[#f2b200]">
          <span className="bg-[#585858] px-[4px]">Number of emitters: 0</span>
          <span className="bg-[#585858] px-[4px]">Total live particles: 0</span>
        </div>
        <svg width="50" height="64" viewBox="0 -8 50 64" fill="none" className="absolute bottom-[22px] left-[32px] text-[15px]">
          <path d="M9 36V19" stroke="#2edc78" strokeWidth="1.300" />
          <path d="M9 36l13-5" stroke="#2f7fe0" strokeWidth="1.300" />
          <path d="M9 36l13 5" stroke="#e23a3a" strokeWidth="1.300" />
          <text x="9" y="13" textAnchor="middle" fill="#2edc78">Y</text>
          <text x="33" y="34" textAnchor="middle" fill="#2f7fe0">Z</text>
          <text x="33" y="50" textAnchor="middle" fill="#e23a3a">X</text>
        </svg>
        <span className="absolute bottom-[3px] right-[2px] bg-black/10 px-[2px] leading-[22px]">网格间距 : 100 cm</span>
      </div>
    </section>
  );
}

/* ---------- timeline ---------- */

const at = (frame) => `${(0.37 + frame * 0.3972).toFixed(3)}%`;
const FRAMES = Array.from({ length: 251 }, (_, f) => f);

function Ruler() {
  return (
    <svg className="h-[32px] min-w-0 flex-1" fill="#b9b9b9">
      {FRAMES.map((f) => <line key={f} x1={at(f)} x2={at(f)} y1="28" y2={f % 10 === 0 ? 32 : 30} stroke="#a8a8a8" />)}
      {FRAMES.filter((f) => f % 25 === 0).map((f) => <line key={f} x1={at(f)} x2={at(f)} y1="5" y2="28" stroke="#8c8c8c" />)}
      <line x1="0" x2="100%" y1="27.500" y2="27.500" stroke="#a8a8a8" />
      {FRAMES.filter((f) => f && f % 10 === 0).map((f) => <text key={f} x={at(f)} y="19" textAnchor="middle">{f}</text>)}
      <text x="11" y="19" fill="#88a3d0">0</text>
      <rect x="1" y="4" width="9" height="24" fill="#88a3d0" />
    </svg>
  );
}

function Key({ label, on, children }) {
  return (
    <button aria-label={label} className={`h-[26px] w-[27px] ${on ? 'bg-[#88a3d0]' : 'bg-[#575757]'}`}>
      <Svg w={27} h={26}>{children}</Svg>
    </button>
  );
}

function Transport() {
  return (
    <div className="flex items-center gap-[11px]">
      <ToolGroup><Key label="转到开始"><path d="M8 7h3v12H8ZM20 7v12l-9-6Z" fill={DARK} /></Key></ToolGroup>
      <ToolGroup>
        <Key label="上一关键帧"><path d="M8 7h2v12H8Z" fill="#eee" /><path d="M10 7h2v12h-2ZM20 7v12l-8-6Z" fill={DARK} /></Key>
        <Key label="上一帧"><path d="M16 7v12l-9-6ZM17.500 7h2v12h-2Z" fill={DARK} /></Key>
        <Key label="播放"><path d="M7 4l15 9-15 9Z" fill={DARK} /></Key>
        <Key label="下一帧"><path d="M11 7v12l9-6ZM7.500 7h2v12h-2Z" fill={DARK} /></Key>
        <Key label="下一关键帧"><path d="M18 7h2v12h-2Z" fill="#eee" /><path d="M16 7h2v12h-2ZM8 7v12l8-6Z" fill={DARK} /></Key>
      </ToolGroup>
      <ToolGroup><Key label="转到结束"><path d="M16 7h3v12h-3ZM7 7v12l9-6Z" fill={DARK} /></Key></ToolGroup>
      <ToolGroup>
        <Key label="记录活动对象"><circle cx="13.500" cy="13" r="9" fill="#7d5656" stroke="#463c3c" /><path d="M9 17l8-8" stroke="#3f3535" strokeWidth="3" /></Key>
        <Key label="自动关键帧"><circle cx="13.500" cy="13" r="9.500" fill="#ef5a5f" stroke="#2c1616" strokeWidth="1.300" /><path d="M11 19q-5-6 0-12M16 19q5-6 0-12M9 7h3v3M18 19h-3v-3" stroke="#20100f" strokeWidth="1.800" /></Key>
      </ToolGroup>
      <div className="flex gap-[3px]">
        <ToolGroup><Key label="关键帧选集"><circle cx="13.500" cy="13" r="10" fill="#c98238" stroke="#2d2117" strokeWidth="1.500" /><Gear x={13.5} y={13} r={4} c={DARK} hole="#c98238" /></Key></ToolGroup>
        <ToolGroup>
          <Key label="位置" on><MoveIcon x={13.5} y={13} s={0.75} c="#f28f2c" /></Key>
          <Key label="缩放" on><path d="M6 6h15v15H6Z" fill="#f28f2c" stroke="#4a3018" /><path d="M6 14h7v7M13 14l8-8" stroke="#4a3018" /></Key>
          <Key label="旋转" on><Rotate x={13.5} y={13} s={0.75} c="#f28f2c" /></Key>
          <Key label="参数" on><circle cx="13.500" cy="13" r="10" stroke="#3a2410" strokeWidth="3" /><circle cx="13.500" cy="13" r="10" stroke={ORANGE} strokeWidth="1.700" /><text x="13.500" y="18" textAnchor="middle" fontSize="14" fontWeight="700" fill="#161616" stroke="#161616" strokeWidth=".600">P</text></Key>
          <Key label="点级别动画">
            {[0, 1, 2].map((r) => [0, 1, 2].map((c) => <circle key={`${r}${c}`} cx={5 + c * 8} cy={6 + r * 7} r="2.800" fill={r < 2 && c < 2 ? '#f29a3a' : DARK} />))}
          </Key>
        </ToolGroup>
      </div>
      <ToolGroup>
        <Key label="胶片" on><path d="M6 3h15v20H6Z" fill="#c98238" stroke={DARK} /><path d="M6 9.500h15M6 16h15" stroke={DARK} strokeWidth="2" /><path d="M8 3v20M19 3v20" stroke={DARK} strokeWidth="2.500" strokeDasharray="2 1.500" /><path d="M27 21v5h-5Z" fill={DARK} /></Key>
      </ToolGroup>
    </div>
  );
}

function Timeline() {
  return (
    <div className="pl-[40px] pr-[3px]">
      <div className="flex items-start">
        <div className="mt-[8px]"><GripV /></div>
        <div className="ml-[5px] flex min-w-0 flex-1"><Ruler /></div>
        <Field label="当前帧" value="0 F" className="ml-[7px] mt-[4px] w-[99px]" />
      </div>
      <div className="mt-[2px] flex items-center">
        <GripV />
        <Field label="起始帧" value="0 F" className="ml-[4px] w-[99px]" />
        <div className="ml-[7px] flex h-[18px] min-w-0 flex-1 items-center justify-between rounded-[3px] bg-[#595959] px-[5px] leading-[18px] text-[#cfcfcf]">
          <span className="flex items-center gap-[6px]"><i className="h-[10px] w-[4px] border-x border-[#8a8a8a]" />0 F</span>
          <span className="flex items-center gap-[9px]">250 F<i className="h-[10px] w-[4px] border-x border-[#8a8a8a]" /></span>
        </div>
        <Field label="结束帧" value="250 F" className="ml-[6px] mr-[11px] w-[100px]" />
        <Transport />
      </div>
    </div>
  );
}

/* ---------- bottom panels ---------- */

function Materials() {
  return (
    <section className="flex min-w-0 flex-1 flex-col border border-[#4b4b4b]">
      <div className="flex h-[30px] items-center gap-[9px] border-b border-[#4b4b4b] pb-[3px] pl-[5px]">
        <Burger />
        <Menu items={[['创建', 'hot'], ['编辑', 'warm'], ['查看'], ['选择'], ['材质'], ['纹理'], ['Cycles 4D']]} />
      </div>
    </section>
  );
}

const COORDS = [['X', 'X', 'H'], ['Y', 'Y', 'P'], ['Z', 'Z', 'B']];

function Coordinates() {
  return (
    <section className="w-[432px] shrink-0 border border-[#4b4b4b]">
      <div className="flex h-[24px] items-center border-b border-[#4b4b4b] pl-[5px] text-[#8f8f8f]">
        <Burger />
        <span className="ml-[8px] w-[135px]">--</span>
        <span className="w-[135px]">--</span>
        <span>--</span>
      </div>
      <div className="mt-[6px] flex flex-col gap-[3px] pl-[3px]">
        {COORDS.map(([a, b, c]) => (
          <div key={a} className="flex items-center">
            <label htmlFor={`pos${a}`} className="w-[14px]">{a}</label>
            <Field id={`pos${a}`} value="0 cm" dim className="w-[125px]" />
            <label htmlFor={`size${a}`} className="ml-[3px] w-[14px]">{b}</label>
            <Field id={`size${a}`} value="0 cm" dim className="w-[125px]" />
            <label htmlFor={`rot${a}`} className="ml-[4px] w-[16px]">{c}</label>
            <Field id={`rot${a}`} value="0 °" dim className="w-[123px]" />
          </div>
        ))}
      </div>
      <div className="mt-[6px] flex pl-[18px]">
        <Select label="坐标模式" value="世界坐标" dim className="w-[123px]" />
        <Select label="尺寸模式" value="缩放比例" dim className="ml-[19px] w-[123px]" />
        <button className="ml-[21px] h-[24px] w-[122px] rounded-[3px] bg-[#595959] leading-[22px] text-[#cfcfcf] shadow-[0_1px_1px_#2f2f2f]">应用</button>
      </div>
    </section>
  );
}

/* ---------- right side ---------- */

function SideTabs({ tabs }) {
  return (
    <div className="flex w-[31px] shrink-0 flex-col items-start gap-[1px] bg-[#323232]">
      {tabs.map((t, i) => (
        <button
          key={t}
          className={`w-[30px] pb-[6px] pt-[6px] leading-[30px] [text-orientation:sideways] [writing-mode:vertical-rl] ${i === 0 ? 'rounded-r-[3px] border-y border-r border-[#4b4b4b] bg-[#3d3d3d] text-[#dcdcdc]' : 'text-[#8c8c8c]'}`}
        >
          {t}
        </button>
      ))}
    </div>
  );
}

function PlusBox() {
  return (
    <svg width="14" height="15" viewBox="0 0 14 15" fill="none" stroke="#9a9a9a"><path d="M1 1h12v13H1Z" strokeWidth="1.300" /><path d="M1 1.500h12M7 5v6M4 8h6" strokeWidth="2" /></svg>
  );
}

function Objects() {
  return (
    <div className="flex min-h-0 flex-[615]">
      <section className="flex min-w-0 flex-1 flex-col border-l border-t border-[#4b4b4b]">
        <div className="flex h-[30px] items-center gap-[9px] pb-[3px] pl-[6px] pr-[2px]">
          <Burger />
          <Menu items={[['文件'], ['编辑'], ['查看', 'hot'], ['对象'], ['标签', 'hot'], ['书签']]} />
          <div className="ml-auto flex items-center gap-[5px]">
            <button aria-label="搜索"><SearchIcon /></button>
            <button aria-label="主页"><svg width="16" height="15" viewBox="0 0 16 15" fill="none" stroke="#8c8c8c" strokeWidth="1.300"><path d="M8 1l6.500 7H12v6H4V8H1.500Z" /></svg></button>
            <button aria-label="过滤"><svg width="15" height="15" viewBox="0 0 15 15" fill="none" stroke="#8c8c8c" strokeWidth="1.500"><path d="M1 1.500h13L9 7.500V12l-3 2.500v-7Z" /></svg></button>
            <button aria-label="新建窗口" className="ml-[3px]"><PlusBox /></button>
          </div>
        </div>
        <div className="relative flex flex-1 border-2 border-[#494949]">
          <div className="w-[40px] border-r-2 border-[#494949]" />
          {/* floating plug-in badge */}
          <svg width="50" height="50" viewBox="0 0 50 50" className="absolute bottom-[-4px] left-[480px]">
            <circle cx="25" cy="25" r="24" fill="#fff" stroke="#2583ea" strokeWidth="2.500" />
            <circle cx="25" cy="25" r="20.500" fill="none" stroke="#222" strokeWidth="1.200" />
            <path d="M21 22q4-2 8 0l-1 8q-3 3-6 0Z" fill="#111" />
            <path d="M22 22q-6-1-8-7M14 13l1 5-4-1M19 19v-5M28 22q6-1 8-7M36 13l-1 5 4-1M31 19v-5" stroke="#111" strokeWidth="1.500" fill="none" />
            <text x="25" y="40" textAnchor="middle" fontSize="6" fontWeight="700" fill="#111">行鹿客</text>
          </svg>
        </div>
      </section>
      <SideTabs tabs={['对象', '场次', '内容浏览器']} />
    </div>
  );
}

const SECTION = 'flex flex-col border-t border-[#4d4d4d] pl-[25px]';

function CheckRow({ left, right, on = true, id }) {
  return (
    <div className="flex h-[27px] items-center">
      <Label htmlFor={`${id}-a`} className="w-[132px]">{left}</Label>
      <Check id={`${id}-a`} checked={on} />
      {right && (
        <>
          <Label htmlFor={`${id}-b`} className="ml-[115px] w-[230px]">{right}</Label>
          <Check id={`${id}-b`} checked={on} />
        </>
      )}
    </div>
  );
}

function FieldRow({ id, left, value, right, value2 }) {
  return (
    <div className="flex items-center">
      <Label htmlFor={`${id}-a`}>{left}</Label>
      <Field id={`${id}-a`} value={value} />
      <Label htmlFor={`${id}-b`} className="ml-[29px] w-[231px]">{right}</Label>
      <Field id={`${id}-b`} value={value2} />
    </div>
  );
}

const PUSH = 'h-[24px] rounded-[3px] bg-[#595959] leading-[22px] text-[#cacaca] shadow-[0_1px_1px_#2f2f2f]';
const TABS = ['工程设置', '信息', 'X-Particles', '动力学', '参考', '待办事项', '帧插值'];

function Attributes() {
  return (
    <div className="mt-[3px] flex flex-[702]">
      <section className="min-w-0 flex-1 border-l border-t border-[#4b4b4b] pl-px">
        <div className="-ml-px flex h-[30px] items-center gap-[9px] border-b border-[#4b4b4b] pl-[6px] pr-[2px]">
          <Burger />
          <Menu items={[['模式'], ['编辑'], ['用户数据']]} />
          <div className="ml-auto flex items-center gap-[5px]">
            <svg width="54" height="16" viewBox="0 0 54 16" fill="none" stroke="#545454" strokeWidth="1.500"><path d="M1 8h15M6 3 1 8l5 5M20 8h15M30 3l5 5-5 5M47 15V2M42 7l5-5 5 5" /></svg>
            <button aria-label="搜索"><SearchIcon /></button>
            <button aria-label="锁定" className="ml-[2px]"><svg width="14" height="16" viewBox="0 0 14 16" fill="none" stroke="#8c8c8c" strokeWidth="1.300"><rect x="1.500" y="7" width="11" height="8" rx="1" /><path d="M4 7V4q3-4 6 0" /><circle cx="7" cy="11" r="1" fill="#8c8c8c" /></svg></button>
            <button aria-label="聚焦"><svg width="16" height="16" viewBox="0 0 16 16" fill="none" stroke="#8c8c8c" strokeWidth="1.300"><circle cx="8" cy="8" r="7" /><circle cx="8" cy="8" r="2.700" /></svg></button>
            <button aria-label="新建窗口"><PlusBox /></button>
          </div>
        </div>
        <div className="flex h-[28px] items-center gap-[4px] pl-[5px]">
          <svg width="17" height="20" viewBox="0 0 17 20"><path d="M0 1h9l3 4v13H0Z" fill="#e8e8e8" /><path d="M9 1l4 5H9Z" fill="#e2683e" /><Gear x={10.5} y={13} r={4.5} c="#e2683e" hole="#fff" /></svg>
          工程
        </div>
        <div role="tablist" className="ml-px flex w-fit gap-px overflow-hidden rounded-[3px] bg-[#484848]">
          {TABS.map((t, i) => (
            <button key={t} role="tab" aria-selected={i === 0} className={`h-[25px] w-[88px] whitespace-nowrap ${i === 0 ? 'bg-[#88a3d0] text-[#111]' : 'bg-[#575757] text-[#c0c0c0]'}`}>{t}</button>
          ))}
        </div>
        <h2 className="h-[35px] pl-[2px] font-bold leading-[35px] text-[#efefef]">工程设置</h2>
        <div className="flex items-center pl-[25px]">
          <Label htmlFor="scale">工程缩放</Label>
          <Field id="scale" value="1" />
          <Select label="单位" value="厘米" className="ml-[6px] w-[63px]" />
        </div>
        <div className="pb-[4px] pl-[13px] pt-[3px]"><button className={`block w-[246px] ${PUSH}`}>缩放工程...</button></div>
        <div className={`${SECTION} gap-[3px] pb-[4px] pt-[5px]`}>
          <FieldRow id="fps" left="帧率(FPS)" value="25" right="工程时长" value2="0 F" />
          <FieldRow id="min" left="最小时长" value="0 F" right="最大时长" value2="250 F" />
          <FieldRow id="pmin" left="预览最小时长" value="0 F" right="预览最大时长" value2="250 F" />
        </div>
        <div className={`${SECTION} pb-[4px] pt-[5px]`}>
          <div className="flex items-center">
            <Label htmlFor="lod">细节程度(LOD)</Label>
            <Field id="lod" value="100 %" />
            <Label htmlFor="lodr" className="ml-[29px] w-[230px]">编辑渲染检视使用渲染LOD级别</Label>
            <Check id="lodr" />
          </div>
        </div>
        <div className={`${SECTION} py-[3px]`}>
          <CheckRow id="anim" left="使用动画" right="使用表达式" />
          <CheckRow id="gen" left="使用生成器" right="使用变形器" />
          <CheckRow id="clip" left="使用运动剪辑系统" />
        </div>
        <div className={`${SECTION} gap-[2px] py-[5px]`}>
          <div className="flex items-center"><Label htmlFor="objcol">默认对象颜色</Label><Select id="objcol" value="60% 灰色" className="w-[101px]" /></div>
          <div className="flex h-[24px] items-center">
            <Label htmlFor="col" arrow>颜色</Label>
            <button id="col" className="h-[24px] w-[98px] border border-[#5c5c5c] bg-[#999999]" />
            <button aria-label="吸管" className="ml-[9px] text-[#a0a0a0]"><Pipette size={20} /></button>
          </div>
        </div>
        <div className={`${SECTION} pb-[4px] pt-[5px]`}>
          <div className="-ml-[21px] flex items-center"><button aria-label="展开" className="w-[21px]"><Caret /></button><Label htmlFor="clipv">视图修剪</Label><Select id="clipv" value="中" className="w-[101px]" /></div>
        </div>
        <div className={`${SECTION} pb-[4px] pt-[3px]`}>
          <CheckRow id="lin" left="线性工作流程" />
          <div className="-ml-[21px] mt-[2px] flex items-center"><button aria-label="展开" className="w-[21px]"><Caret /></button><Label htmlFor="prof">输入色彩特性</Label><Select id="prof" value="sRGB" className="w-[101px]" /></div>
        </div>
        <div className={`${SECTION} pb-[2px] pt-[4px]`}>
          <div className="flex h-[27px] items-center gap-[4px]"><label htmlFor="nodemat" className="text-[#bdbdbd]">为节点材质使用颜色通道</label><Check id="nodemat" /></div>
        </div>
        <div className="flex gap-[14px] border-t border-[#4d4d4d] pl-[13px] pt-[5px]">
          <button className={`w-[98px] ${PUSH}`}>载入预设...</button>
          <button className={`w-[98px] ${PUSH}`}>保存预设...</button>
        </div>
      </section>
      <SideTabs tabs={['属性', '层', '构造']} />
    </div>
  );
}

/* ---------- page ---------- */

export default function App() {
  return (
    <div className="flex min-h-screen w-full flex-col bg-[#3d3d3d] font-['Noto_Sans','Noto_Sans_CJK_SC',sans-serif] text-[16px] leading-[22px] text-[#c6c6c6]">
      <TitleBar />
      <MenuBar />
      <main className="grid flex-1 grid-cols-[1605fr_955fr]">
        <div className="flex min-w-0 flex-col pb-[3px]">
          <MainToolbar />
          <div className="flex flex-1 pr-[3px]">
            <div className="flex shrink-0 gap-[5px] pr-[4px] pt-px">
              <ModeColumn />
              <SelectColumn />
              <EmptyColumn />
            </div>
            <Viewport />
          </div>
          <Timeline />
          <div className="mt-[4px] flex h-[185px] gap-[3px] pl-[40px] pr-[3px]">
            <Materials />
            <Coordinates />
          </div>
        </div>
        <div className="flex min-w-0 flex-col pb-[3px] shadow-[-2px_0_0_#484848]">
          <Objects />
          <Attributes />
        </div>
      </main>
      <footer className="flex h-[25px] items-center border border-[#4b4b4b] pl-[4px]"><Burger /></footer>
    </div>
  );
}
